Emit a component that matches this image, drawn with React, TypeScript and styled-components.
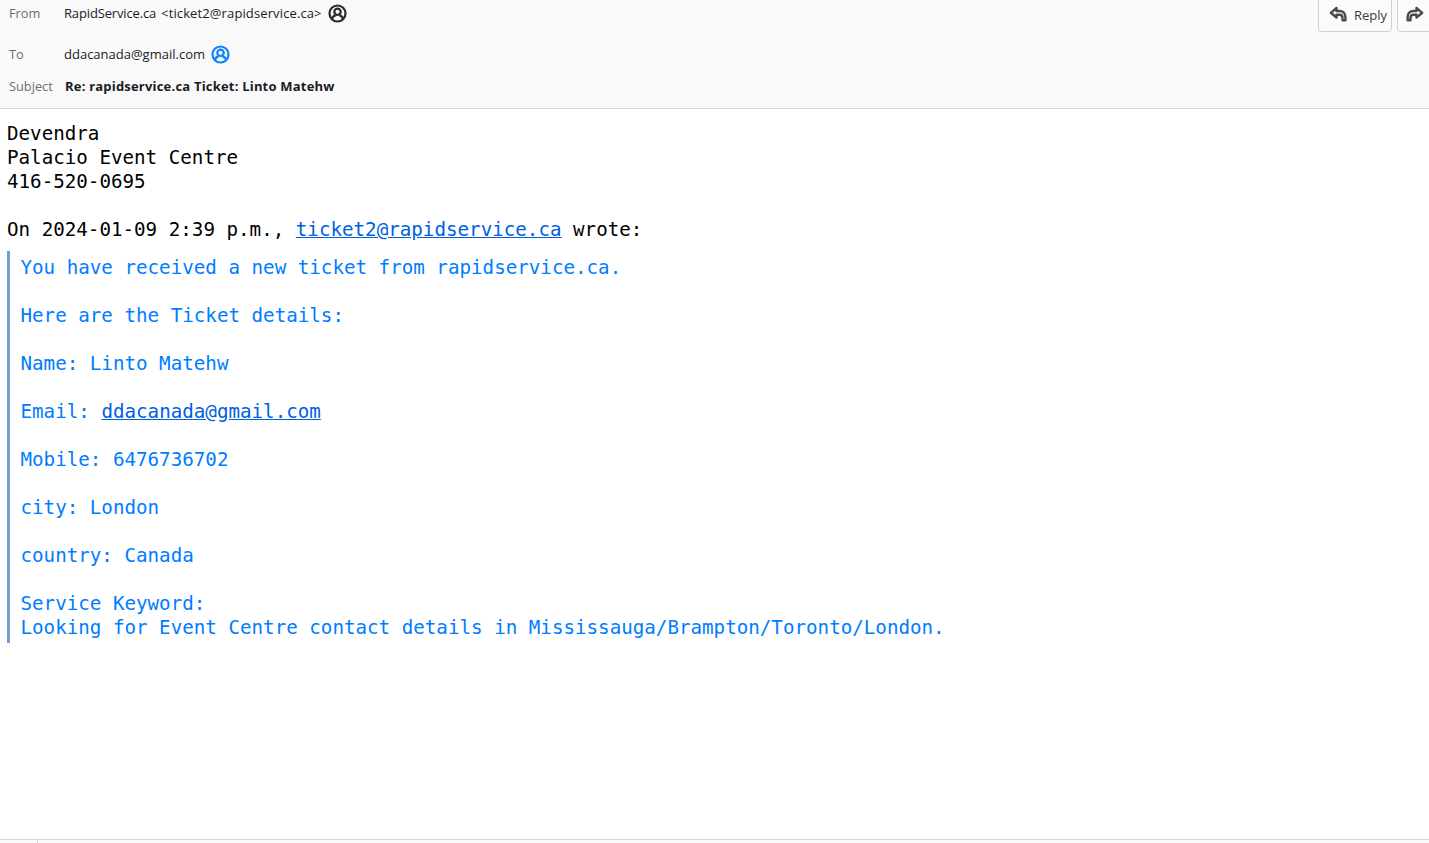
import React from 'react';
import styled, { createGlobalStyle } from 'styled-components';

const Global = createGlobalStyle`
  html, body { margin: 0; padding: 0; background: #fff; height: 100%; overflow: hidden; }
  #root { height: 100%; }
`;
const Page = styled.div`
  height: 843px; display: flex; flex-direction: column; overflow: hidden;
  font-family: "Open Sans", "Noto Sans", "Liberation Sans", sans-serif;
`;
const Header = styled.header`
  height: 108px; flex: none; box-sizing: border-box; background: #f9f9fa;
  display: flex; justify-content: space-between; align-items: flex-start;
  padding: 0 0 0 9px; overflow: hidden;
`;
const Fields = styled.div`display: flex; flex-direction: column;`;
const Row = styled.div<{ $h: number }>`
  height: ${p => p.$h}px; display: flex; align-items: center;
`;
const Label = styled.span`
  width: 55px; flex: none; font-size: 12.8px; color: #6d6d72;
`;
const Value = styled.span<{ $s?: number; $gap?: number }>`
  font-size: 13px; color: #1c1b22; white-space: pre;
  letter-spacing: ${p => p.$s ?? 0}px; margin-left: ${p => p.$gap ?? 0}px;
`;
const Subject = styled.span`
  font-size: 13px; font-weight: 700; color: #1c1b22; margin-left: 1px; letter-spacing: 0.2px;
`;
const Avatar = styled.svg`width: 19px; height: 19px; margin-left: 6px; flex: none;`;
const Actions = styled.div`display: flex; gap: 5px; margin: -6px -8px 0 0;`;
const ActionButton = styled.button<{ $w: number; $pad: number }>`
  width: ${p => p.$w}px; height: 38px; box-sizing: border-box; padding: 6px 0 0 ${p => p.$pad}px;
  background: #fbfbfb; border: 1px solid #cfcfd8; border-radius: 4px;
  display: flex; align-items: center; gap: 7px; color: #3a3a42;
  font: 13px "Open Sans", "Noto Sans", sans-serif; flex: none;
`;
const ActionIcon = styled.svg`width: 18px; height: 16px; margin-top: -4px; flex: none;`;
const ReplyLabel = styled.span`margin-top: -3px;`;
const Body = styled.main`
  flex: 1; border-top: 1px solid #d7d7db; padding: 13px 0 0 7px;
  font: 19.2px/24px "DejaVu Sans Mono", monospace; color: #000;
`;
const Line = styled.div`min-height: 24px; white-space: pre;`;
const Mail = styled.a`color: #0060df; text-decoration: underline;`;
const Quote = styled.blockquote`
  margin: 9px 0 0; padding: 5px 0 3px 10.5px; border-left: 3px solid #729fcf; color: #007cff;
`;
const Footer = styled.footer`
  height: 3px; flex: none; border-top: 1px solid #d7d7db; background: #f9f9fa; padding-left: 37px;
`;
const Tick = styled.div`width: 1px; height: 3px; background: #d7d7db;`;

const Person = ({ color }: { color: string }) => (
  <Avatar viewBox="0 0 19 19" fill="none" stroke={color} strokeWidth="2.2">
    <circle cx="9.5" cy="9.5" r="8" />
    <circle cx="9.5" cy="7.8" r="3.2" />
    <path d="M4 15.500c.2-2.800 2-3.900 3.600-4.200M15 15.500c-.2-2.800-2-3.900-3.600-4.200" />
  </Avatar>
);
const ReplyIcon = () => (
  <ActionIcon viewBox="0 0 18 16" fill="none" stroke="#4a4a50" strokeWidth="2.4" strokeLinejoin="round">
    <path d="M7.500 2 1.800 6.800l5.700 4.700V8.800h3c2 0 3 1 3 2.700v2.700h2.900v-3C16.400 7.300 14 5 10.500 5h-3z" />
  </ActionIcon>
);
const ForwardIcon = () => (
  <ActionIcon viewBox="0 0 18 16" fill="none" stroke="#4a4a50" strokeWidth="2.4" strokeLinejoin="round">
    <path d="M10.500 2l5.700 4.800-5.700 4.700V8.800h-3c-2 0-3 1-3 2.700v2.700H1.600v-3C1.600 7.300 4 5 7.500 5h3z" />
  </ActionIcon>
);

const quoteLines = [
  'You have received a new ticket from rapidservice.ca.', '',
  'Here are the Ticket details:', '',
  'Name: Linto Matehw', '',
  null, '',
  'Mobile: 6476736702', '',
  'city: London', '',
  'country: Canada', '',
  'Service Keyword:',
  'Looking for Event Centre contact details in Mississauga/Brampton/Toronto/London.',
];

export default function App() {
  return (
    <Page>
      <Global />
      <Header>
        <Fields>
          <Row $h={26}>
            <Label>From</Label>
            <Value $s={-0.15}>RapidService.ca</Value>
            <Value $s={0.12} $gap={5}>&lt;ticket2@rapidservice.ca&gt;</Value>
            <Person color="#2b2a33" />
          </Row>
          <Row $h={28} />
          <Row $h={0}>
            <Label>To</Label>
            <Value>ddacanada@gmail.com</Value>
            <Person color="#0a84ff" />
          </Row>
          <Row $h={32} />
          <Row $h={0}>
            <Label>Subject</Label>
            <Subject>Re: rapidservice.ca Ticket: Linto Matehw</Subject>
          </Row>
        </Fields>
        <Actions>
          <ActionButton $w={74} $pad={10}><ReplyIcon /><ReplyLabel>Reply</ReplyLabel></ActionButton>
          <ActionButton $w={40} $pad={8}><ForwardIcon /></ActionButton>
        </Actions>
      </Header>
      <Body>
        <Line>Devendra</Line>
        <Line>Palacio Event Centre</Line>
        <Line>416-520-0695</Line>
        <Line />
        <Line>On 2024-01-09 2:39 p.m., <Mail>ticket2@rapidservice.ca</Mail> wrote:</Line>
        <Quote>
          {quoteLines.map((l, i) => (
            <Line key={i}>{l === null ? <>Email: <Mail>ddacanada@gmail.com</Mail></> : l}</Line>
          ))}
        </Quote>
      </Body>
      <Footer><Tick /></Footer>
    </Page>
  );
}
